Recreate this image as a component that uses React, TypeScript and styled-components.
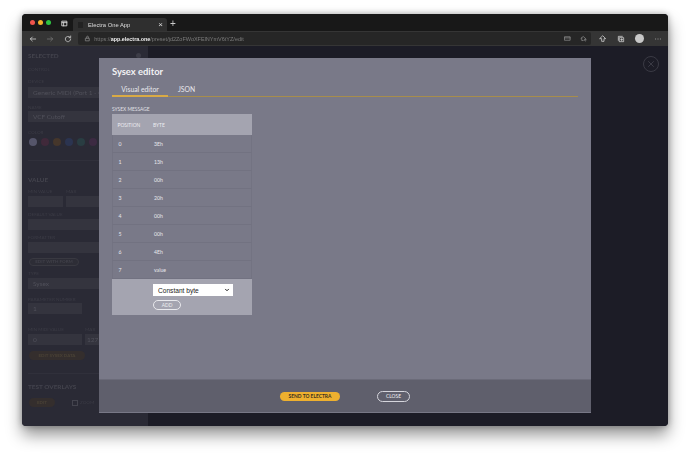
import React from "react";
import styled, { createGlobalStyle } from "styled-components";

const Global = createGlobalStyle`
  html, body { margin: 0; padding: 0; background: #fff; }
  body { width: 690px; height: 455px; overflow: hidden; font-family: "Lato", "Open Sans", "Liberation Sans", sans-serif; }
  * { box-sizing: border-box; }
`;
const Page = styled.div`
  width: 690px; height: 455px; padding: 14px 22px 29px 22px; background: #fff;
`;
const Shadowed = styled.div`
  border-radius: 4px; box-shadow: 0 9px 16px rgba(0,0,0,.42), 0 0 6px rgba(0,0,0,.3);
`;
const Win = styled.div`
  position: relative; width: 646px; height: 412px; border-radius: 4px; overflow: hidden;
  display: flex; flex-direction: column; background: #1c1c26; filter: blur(.3px);
`;
const TabStrip = styled.div`
  height: 17px; background: #181818; display: flex; align-items: flex-end; padding-left: 8px; flex: none;
`;
const Lights = styled.div`display: flex; gap: 3px; align-self: center; margin-top: -1px; margin-right: 10px;`;
const Light = styled.span<{ $c: string }>`width: 5px; height: 5px; border-radius: 50%; background: ${p => p.$c};`;
const TabAction = styled.span`display: flex; margin-right: 5px; align-self: center; margin-top: 2px; color: #ddd;`;
const Tab = styled.div`
  width: 94px; height: 13px; background: #2f2f2f; border-radius: 3px 3px 0 0; color: #ddd; font: 5.8px "Liberation Sans", sans-serif;
  display: flex; align-items: center; padding: 0 4px 0 5px; gap: 5px;
`;
const Favicon = styled.span`width: 5px; height: 6px; background: #222; flex: none;`;
const TabTitle = styled.span`flex: 1;`;
const TabClose = styled.span`font-size: 8px; color: #ddd;`;
const NewTab = styled.span`color: #ccc; font: 10px "Liberation Sans", sans-serif; margin-left: 3px; align-self: center; margin-top: 2px;`;
const Toolbar = styled.div`
  height: 15px; background: #353535; display: flex; align-items: center; padding: 0 6px 0 2px; flex: none; color: #ddd;
`;
const NavIcon = styled.span<{ $dim?: boolean }>`
  display: flex; width: 17.5px; justify-content: center; opacity: ${p => (p.$dim ? 0.4 : 1)};
`;
const Address = styled.div`
  margin-left: 2px; width: 515px; height: 13px; background: #262626; border-radius: 2px; display: flex; align-items: center;
  padding: 0 3px 0 6px; font: 5.5px "Liberation Sans", sans-serif; color: #7c7c7c;
`;
const UrlText = styled.span`flex: 1; margin-left: 3px; white-space: nowrap;`;
const UrlHost = styled.b`color: #eee; font-weight: 700; font-size: 5.4px;`;
const AddrIcons = styled.span`display: flex; gap: 9px; color: #999; margin-right: 1px;`;
const ToolIcons = styled.span`display: flex; align-items: center; gap: 10px; margin-left: 8px;`;
const Avatar = styled.span`width: 9px; height: 9px; border-radius: 50%; background: #c8c8c8; display: block;`;
const Content = styled.div`flex: 1; display: flex; min-height: 0;`;
const Side = styled.div`
  width: 126px; background: #2a2a35; padding: 6px 6px 0; display: flex; flex-direction: column; color: #42424c;
  font-size: 5px; line-height: 7px; filter: blur(.4px); white-space: nowrap; overflow: hidden;
`;
const Main = styled.div`flex: 1; background: #1c1c26;`;
const SideHead = styled.div<{ $t?: number }>`
  font-size: 6.4px; font-weight: 700; color: #43434d; display: flex; justify-content: space-between; align-items: center; margin-top: ${p => p.$t ?? 0}px; flex: none;
`;
const GearDot = styled.span`width: 5px; height: 5px; border-radius: 50%; background: #3c3c47; margin-right: 1px;`;
const SideLabel = styled.div<{ $t?: number }>`color: #3c3c46; margin-top: ${p => p.$t ?? 0}px; font-size: 4.6px; flex: none; height: 7px;`;
const LabelPair = styled.div<{ $t: number; $first: number }>`
  display: grid; grid-template-columns: ${p => p.$first}px auto; color: #3c3c46; margin-top: ${p => p.$t}px; font-size: 4.6px; flex: none; height: 7px;
`;
const Field = styled.div<{ $w?: number; $t?: number; $pad?: number }>`
  height: 11px; width: ${p => (p.$w ? p.$w + "px" : "100%")}; background: #34343e; color: #50505a;
  font-size: 6.5px; line-height: 11px; padding: 0 0 0 ${p => p.$pad ?? 5}px; margin-top: ${p => p.$t ?? 1}px; white-space: nowrap; flex: none;
`;
const Swatches = styled.div`display: flex; gap: 4px; margin: 2px 0 0 1px;`;
const Swatch = styled.span<{ $c: string }>`width: 8px; height: 8px; border-radius: 50%; background: ${p => p.$c}; flex: none;`;
const FieldRow = styled.div<{ $gap: number }>`display: flex; gap: ${p => p.$gap}px; margin-top: 1px; flex: none;`;
const SidePill = styled.div<{ $t: number; $w: number; $h?: number; $outline?: boolean }>`
  height: ${p => p.$h ?? 9}px; width: ${p => p.$w}px; border-radius: 5px; margin: ${p => p.$t}px 0 0 1px; color: #4a4236;
  background: ${p => (p.$outline ? "#2d2d36" : "#342e2d")}; ${p => (p.$outline ? "border: 1px solid #393941; line-height: 6px; color: #41414a;" : "line-height: 9px;")}
  font-size: 4.5px; text-align: center; font-weight: 700; flex: none;
`;
const Rule = styled.div<{ $t: number }>`height: 1px; background: #30303b; margin-top: ${p => p.$t}px; flex: none;`;
const TestRow = styled.div`display: flex; align-items: center; margin-top: 8px; flex: none;`;
const Check = styled.span`width: 6px; height: 6px; border: 1px solid #44444e; margin-left: 17px; flex: none;`;
const CheckText = styled.span`margin-left: 2px; color: #3c3c46; font-size: 4.6px;`;
const Modal = styled.div`
  position: absolute; left: 77px; top: 44px; width: 492px; height: 355px; background: #797988; display: flex; flex-direction: column;
  color: #f0f0f3;
`;
const ModalBody = styled.div`flex: 1; padding: 8px 13px 0; min-height: 0;`;
const Title = styled.div`font-size: 9.4px; line-height: 11px; font-weight: 700; color: #f2f2f4;`;
const Tabs = styled.div`display: flex; border-bottom: 1px solid #a78d4c; margin-top: 6px; height: 14px; width: 466px;`;
const ModalTab = styled.div<{ $active?: boolean }>`
  width: ${p => (p.$active ? 56 : 44)}px; height: 14px; font-size: 6.8px; line-height: 13px; color: #e8e8ec;
  ${p => (p.$active ? "text-align: center; border-bottom: 2px solid #d9aa45;" : "padding-left: 10px;")}
`;
const Caption = styled.div`font-size: 4.9px; line-height: 6px; margin-top: 9px; color: #e0e0e6;`;
const Table = styled.div`width: 140px; margin-top: 2px;`;
const HeadRow = styled.div`height: 21px; background: #a4a4b0; display: flex; align-items: center; font-size: 4.9px; color: #ececf0;`;
const Row = styled.div`height: 18px; display: flex; align-items: center; font-size: 5.2px; border-bottom: 1px solid #727281; border-left: 1px solid #737382; border-right: 1px solid #737382; color: #e8e8ec;`;
const PosCell = styled.div`width: 41px; padding-left: 5.5px; flex: none;`;
const AddBox = styled.div`background: #a4a4b0; height: 36px; padding: 5px 0 0 41px;`;
const Select = styled.div`
  width: 80px; height: 12px; background: #fff; color: #222; font: 6.6px "Liberation Sans", sans-serif; display: flex; align-items: center;
  justify-content: space-between; padding: 0 3px 0 5px;
`;
const AddBtn = styled.div`
  width: 28px; height: 10px; border: 1px solid #e8e8ec; border-radius: 5px; margin-top: 4px; font-size: 4.9px; line-height: 8px; text-align: center; color: #f0f0f2;
`;
const Footer = styled.div`
  height: 34px; background: #5f5f6c; border-top: 1px solid #6b6b79; border-bottom: 1px solid #787886; display: flex; align-items: center; flex: none; padding-left: 181px;
`;
const Send = styled.div`
  width: 60px; height: 9px; margin-top: 1px; border-radius: 5px; background: #eeb02f; color: #3a3020; font-size: 4.9px; font-weight: 700; line-height: 9px; text-align: center;
`;
const Close = styled.div`
  width: 33px; height: 11px; margin-left: 37px; border: 1px solid #d5d5dc; border-radius: 5.5px; font-size: 4.9px; line-height: 9px; text-align: center; color: #f0f0f2;
`;
const X = styled.div`
  position: absolute; right: 9px; top: 42px; width: 16px; height: 16px; border: 1px solid #3a3a44; border-radius: 50%; color: #3e3e48;
  display: flex; align-items: center; justify-content: center;
`;

const Ic = ({ d, s = 8, w = 2.2 }: { d: string; s?: number; w?: number }) => (
  <svg width={s} height={s} viewBox="0 0 24 24" fill="none" stroke="currentColor" strokeWidth={w} strokeLinecap="round" strokeLinejoin="round"><path d={d} /></svg>
);
const rows = [["0", "3Eh"], ["1", "13h"], ["2", "00h"], ["3", "20h"], ["4", "00h"], ["5", "00h"], ["6", "4Eh"], ["7", "value"]];

export default function App() {
  return (
    <Page>
      <Global />
      <Shadowed>
        <Win>
          <TabStrip>
            <Lights><Light $c="#f0544c" /><Light $c="#f4b42d" /><Light $c="#2fc441" /></Lights>
            <TabAction><Ic d="M4 4h16v16H4zM4 9h16M9 9v11" s={7} w={3} /></TabAction>
            <Tab><Favicon /><TabTitle>Electra One App</TabTitle><TabClose>×</TabClose></Tab>
            <NewTab>+</NewTab>
          </TabStrip>
          <Toolbar>
            <NavIcon><Ic d="M20 12H4M10 6l-6 6 6 6" /></NavIcon>
            <NavIcon $dim><Ic d="M4 12h16M14 6l6 6-6 6" /></NavIcon>
            <NavIcon><Ic d="M20 12a8 8 0 1 1-3-6.2M20 3v5h-5" /></NavIcon>
            <Address>
              <Ic d="M6 11h12v9H6zM9 11V7a3 3 0 0 1 6 0v4" s={7} w={3} />
              <UrlText>https://<UrlHost>app.electra.one</UrlHost>/preset/jd2ZoFWoXFElNYmV6tYZ/edit</UrlText>
              <AddrIcons>
                <Ic d="M3 6h18v12H3zM3 10h18" s={7} />
                <Ic d="M3 12l8-7 8 7M6 10v9h5M18 14a3 3 0 1 0 .1 0" s={7} />
              </AddrIcons>
            </Address>
            <ToolIcons>
              <Ic d="M12 3l8 8h-5v8H8v-8H3z" />
              <Ic d="M8 8h12v12H8zM4 16V4h12M14 11v6M11 14h6" />
              <Avatar />
              <Ic d="M5 12h.01M12 12h.01M19 12h.01" />
            </ToolIcons>
          </Toolbar>
          <Content>
            <Side>
              <SideHead>SELECTED<GearDot /></SideHead>
              <SideLabel $t={7}>CONTROL</SideLabel>
              <SideLabel $t={5}>DEVICE</SideLabel>
              <Field $t={2} $w={71}>Generic MIDI (Port 1 - C</Field>
              <SideLabel $t={6}>NAME</SideLabel>
              <Field $t={0} $w={71}>VCF Cutoff</Field>
              <SideLabel $t={7}>COLOR</SideLabel>
              <Swatches>
                <Swatch $c="#55556a" /><Swatch $c="#40293a" /><Swatch $c="#45362b" /><Swatch $c="#2b3450" /><Swatch $c="#293d42" /><Swatch $c="#3c2a42" />
              </Swatches>
              <Rule $t={14} />
              <SideHead $t={15}>VALUE</SideHead>
              <LabelPair $t={5} $first={38}><span>MIN VALUE</span><span>MAX</span></LabelPair>
              <FieldRow $gap={3}><Field $w={35} $t={0} /><Field $w={33} $t={0} /></FieldRow>
              <SideLabel $t={4}>DEFAULT VALUE</SideLabel>
              <Field $w={71} />
              <SideLabel $t={4}>FORMATTER</SideLabel>
              <Field $w={71} />
              <SidePill $t={5} $w={50} $h={8} $outline>EDIT WITH FORM</SidePill>
              <SideLabel $t={4}>TYPE</SideLabel>
              <Field $w={71}>Sysex</Field>
              <SideLabel $t={7}>PARAMETER NUMBER</SideLabel>
              <Field $w={54} $t={0}>1</Field>
              <LabelPair $t={12} $first={57}><span>MIN MIDI VALUE</span><span>MAX</span></LabelPair>
              <FieldRow $gap={3}><Field $w={54} $t={0}>0</Field><Field $w={14} $t={0} $pad={2}>127</Field></FieldRow>
              <SidePill $t={6} $w={56}>EDIT SYSEX DATA</SidePill>
              <Rule $t={13} />
              <SideHead $t={9}>TEST OVERLAYS</SideHead>
              <TestRow>
                <SidePill $t={0} $w={26}>EDIT</SidePill>
                <Check /><CheckText>ZOOM</CheckText>
              </TestRow>
            </Side>
            <Main />
          </Content>
          <X><Ic d="M6 6l12 12M18 6L6 18" s={10} /></X>
          <Modal>
            <ModalBody>
              <Title>Sysex editor</Title>
              <Tabs>
                <ModalTab $active>Visual editor</ModalTab>
                <ModalTab>JSON</ModalTab>
              </Tabs>
              <Caption>SYSEX MESSAGE</Caption>
              <Table>
                <HeadRow><PosCell>POSITION</PosCell><div>BYTE</div></HeadRow>
                {rows.map(([a, b]) => <Row key={a}><PosCell>{a}</PosCell><div>{b}</div></Row>)}
                <AddBox>
                  <Select>Constant byte<Ic d="M6 9l6 6 6-6" s={6} w={4} /></Select>
                  <AddBtn>ADD</AddBtn>
                </AddBox>
              </Table>
            </ModalBody>
            <Footer><Send>SEND TO ELECTRA</Send><Close>CLOSE</Close></Footer>
          </Modal>
        </Win>
      </Shadowed>
    </Page>
  );
}
